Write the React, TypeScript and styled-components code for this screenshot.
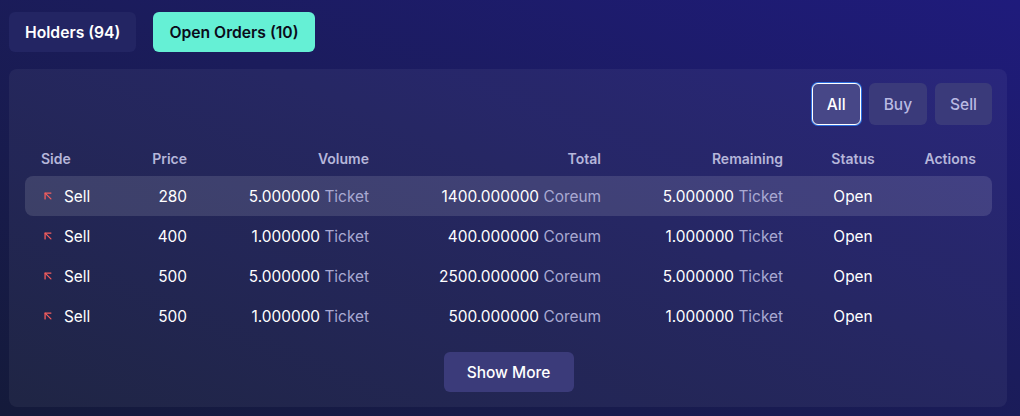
import React from "react";
import styled, { createGlobalStyle } from "styled-components";
import { ArrowUpLeft } from "lucide-react";

const Global = createGlobalStyle`
  html, body { margin: 0; padding: 0; }
  body {
    width: 1020px;
    height: 416px;
    overflow: hidden;
    font-family: Inter, "Noto Sans", sans-serif;
    background: linear-gradient(to top right, #141a3a 0%, #1b1c5c 55%, #1f1b7c 100%);
    color: #fff;
  }
`;

const Page = styled.div`
  display: flex;
  flex-direction: column;
  gap: 17px;
  padding: 12px 13px 10px 9px;
`;

const Tabs = styled.div`
  display: flex;
  gap: 17px;
`;

const Tab = styled.button<{ $active?: boolean }>`
  height: 40px;
  padding: 0 16px;
  border: none;
  border-radius: 6px;
  font-family: inherit;
  font-size: 15.7px;
  font-weight: 600;
  cursor: pointer;
  background: ${(p) => (p.$active ? "#65f0d5" : "#232563")};
  color: ${(p) => (p.$active ? "#0b0b1a" : "#ffffff")};
`;

const Panel = styled.div`
  display: flex;
  flex-direction: column;
  padding: 14px 15px 15px 16px;
  border-radius: 8px;
  background: rgba(255, 255, 255, 0.05);
`;

const FilterBar = styled.div`
  display: flex;
  justify-content: flex-end;
  gap: 8px;
`;

const FilterButton = styled.button<{ $active?: boolean }>`
  height: 42px;
  padding: 0 14px;
  border-radius: 6px;
  font-family: inherit;
  font-size: 15.5px;
  font-weight: 500;
  cursor: pointer;
  background: ${(p) => (p.$active ? "#474787" : "#3a3a7a")};
  color: ${(p) => (p.$active ? "#ffffff" : "#b9b9e2")};
  border: ${(p) => (p.$active ? "1px solid #ffffff" : "1px solid transparent")};
  box-shadow: ${(p) => (p.$active ? "0 0 0 1px #2c6fe0" : "none")};
`;

const cols = "100px 46px 182px 232px 182px 140px minmax(0, 1fr)";

const HeaderRow = styled.div`
  display: grid;
  grid-template-columns: ${cols};
  align-items: center;
  height: 24px;
  margin-top: 21px;
  margin-bottom: 6px;
  padding: 0 16px;
  font-size: 14px;
  font-weight: 600;
  color: #b6b6da;
`;

const Row = styled.div<{ $highlight?: boolean }>`
  display: grid;
  grid-template-columns: ${cols};
  align-items: center;
  height: 40px;
  padding: 0 16px;
  border-radius: 8px;
  font-size: 15.4px;
  color: #ffffff;
  background: ${(p) => (p.$highlight ? "rgba(255,255,255,0.12)" : "transparent")};
`;

const Cell = styled.div<{ $align?: "left" | "right" | "center" }>`
  text-align: ${(p) => p.$align || "left"};
  white-space: nowrap;
`;

const SideCell = styled.div`
  display: flex;
  align-items: center;
  gap: 9px;
  color: #fff;
`;

const Unit = styled.span`
  color: #a9a9d2;
`;

const Footer = styled.div`
  display: flex;
  justify-content: center;
  margin-top: 16px;
`;

const ShowMore = styled.button`
  height: 40px;
  width: 130px;
  border: none;
  border-radius: 6px;
  background: #3b3b7a;
  color: #fff;
  font-family: inherit;
  font-size: 15.5px;
  font-weight: 500;
  cursor: pointer;
`;

const orders = [
  { price: 280, volume: "5.000000", total: "1400.000000", remaining: "5.000000" },
  { price: 400, volume: "1.000000", total: "400.000000", remaining: "1.000000" },
  { price: 500, volume: "5.000000", total: "2500.000000", remaining: "5.000000" },
  { price: 500, volume: "1.000000", total: "500.000000", remaining: "1.000000" },
];

export default function App() {
  return (
    <>
      <Global />
      <Page>
        <Tabs>
          <Tab>Holders (94)</Tab>
          <Tab $active>Open Orders (10)</Tab>
        </Tabs>
        <Panel>
          <FilterBar>
            <FilterButton $active>All</FilterButton>
            <FilterButton>Buy</FilterButton>
            <FilterButton>Sell</FilterButton>
          </FilterBar>
          <HeaderRow>
            <Cell>Side</Cell>
            <Cell $align="right">Price</Cell>
            <Cell $align="right">Volume</Cell>
            <Cell $align="right">Total</Cell>
            <Cell $align="right">Remaining</Cell>
            <Cell $align="center">Status</Cell>
            <Cell $align="right">Actions</Cell>
          </HeaderRow>
          {orders.map((o, i) => (
            <Row key={i} $highlight={i === 0}>
              <SideCell>
                <ArrowUpLeft size={14} color="#f65d5d" strokeWidth={2.2} />
                Sell
              </SideCell>
              <Cell $align="right">{o.price}</Cell>
              <Cell $align="right">
                {o.volume} <Unit>Ticket</Unit>
              </Cell>
              <Cell $align="right">
                {o.total} <Unit>Coreum</Unit>
              </Cell>
              <Cell $align="right">
                {o.remaining} <Unit>Ticket</Unit>
              </Cell>
              <Cell $align="center">Open</Cell>
              <Cell $align="right"></Cell>
            </Row>
          ))}
          <Footer>
            <ShowMore>Show More</ShowMore>
          </Footer>
        </Panel>
      </Page>
    </>
  );
}
